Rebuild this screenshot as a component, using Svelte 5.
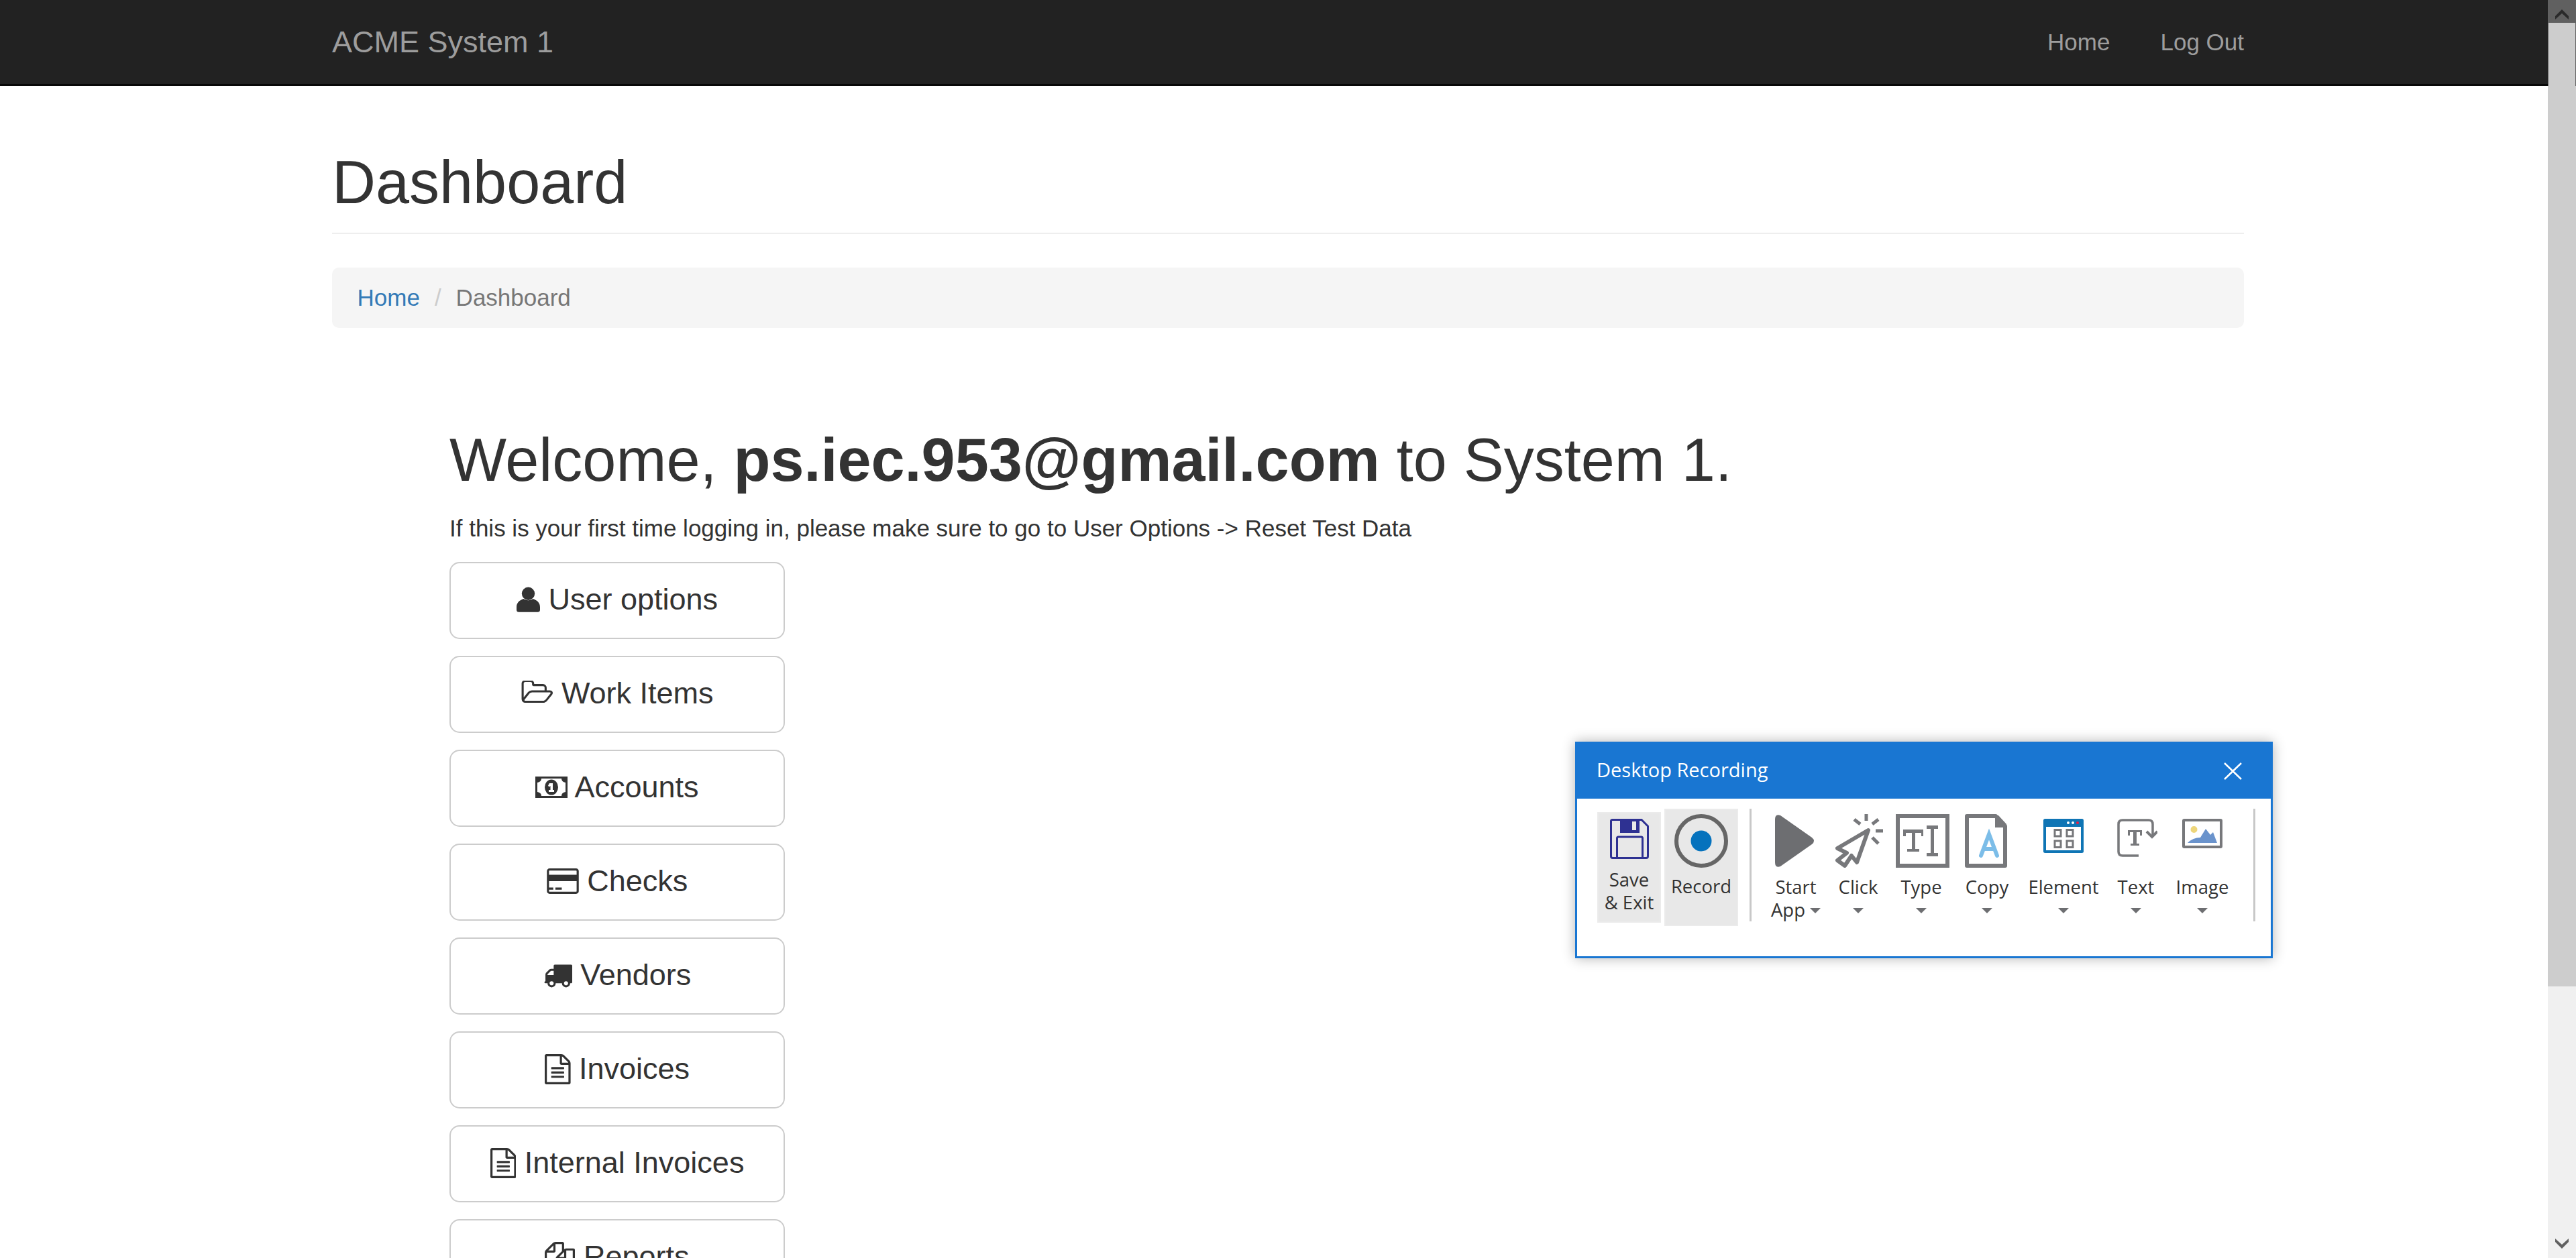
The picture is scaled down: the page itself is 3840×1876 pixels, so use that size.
<script>
  const menu = [
    { label: "User options", icon: "user" },
    { label: "Work Items", icon: "folder" },
    { label: "Accounts", icon: "money" },
    { label: "Checks", icon: "card" },
    { label: "Vendors", icon: "truck" },
    { label: "Invoices", icon: "file" },
    { label: "Internal Invoices", icon: "file" },
    { label: "Reports", icon: "files" },
  ];

  const filePath =
    "M1596 380q28 28 48 76t20 88v1152q0 40-28 68t-68 28h-1344q-40 0-68-28t-28-68v-1600q0-40 28-68t68-28h896q40 0 88 20t76 48zm-444-244v376h376q-10-29-22-41l-313-313q-12-12-41-22zm384 1528v-1024h-416q-40 0-68-28t-28-68v-416h-768v1536h1280zm-1024-864q0-14 9-23t23-9h704q14 0 23 9t9 23v64q0 14-9 23t-23 9h-704q-14 0-23-9t-9-23v-64zm736 224q14 0 23 9t9 23v64q0 14-9 23t-23 9h-704q-14 0-23-9t-9-23v-64q0-14 9-23t23-9h704zm0 256q14 0 23 9t9 23v64q0 14-9 23t-23 9h-704q-14 0-23-9t-9-23v-64q0-14 9-23t23-9h704z";
</script>

<div class="page">
  <nav class="navbar">
    <div class="container nav-inner">
      <span class="brand">ACME System 1</span>
      <div class="nav-links">
        <span>Home</span>
        <span>Log Out</span>
      </div>
    </div>
  </nav>

  <div class="container">
    <div class="page-header"><h1>Dashboard</h1></div>
    <ol class="breadcrumb">
      <li><span class="link">Home</span></li>
      <li class="sep">/</li>
      <li class="active">Dashboard</li>
    </ol>

    <div class="welcome">
      <h2>Welcome, <strong>ps.iec.953@gmail.com</strong> to System 1.</h2>
      <p>If this is your first time logging in, please make sure to go to User Options -&gt; Reset Test Data</p>
      <div class="menu">
        {#each menu as item}
          <button type="button" class="btn">
            {#if item.icon === "user"}
              <svg class="i-user" viewBox="0 0 98 105"><circle cx="49" cy="28" r="27" /><path d="M0 85C0 66 12 56 30 50 38 58 60 58 68 50 86 56 98 66 98 85V95Q98 105 88 105H10Q0 105 0 95Z" /></svg>
            {:else if item.icon === "folder"}
              <svg class="i-folder" viewBox="0 192 1973 1408"><path d="M1845 931q0-35-53-35h-1088q-40 0-85.5 21.5t-71.5 52.5l-294 363q-18 24-18 40 0 35 53 35h1088q40 0 86-22t71-53l294-363q18-22 18-39zm-1141-163h768v-160q0-40-28-68t-68-28h-576q-40 0-68-28t-28-68v-64q0-40-28-68t-68-28h-320q-40 0-68 28t-28 68v853l256-315q44-53 116-87.5t140-34.5zm1269 163q0 62-46 120l-295 363q-43 53-116 87.5t-140 34.5h-1088q-92 0-158-66t-66-158v-960q0-92 66-158t158-66h320q92 0 158 66t66 158v32h544q92 0 158 66t66 158v160h192q54 0 99 24.5t67 70.5q15 32 15 68z" /></svg>
            {:else if item.icon === "money"}
              <svg class="i-money" viewBox="0 0 48 32"><path fill-rule="evenodd" d="M0 0H48V32H0ZM9 3Q9 8 3 9V23Q9 24 9 29H39Q39 24 45 23V9Q39 8 39 3Z" /><ellipse cx="24" cy="16" rx="10" ry="11.5" /><path fill="#fff" d="M21 10H26V20H28V23H20V20H22.5V14L20.5 15.5 19 13.5Z" /></svg>
            {:else if item.icon === "card"}
              <svg class="i-card" viewBox="0 128 1920 1536"><path d="M1760 128q66 0 113 47t47 113v1216q0 66-47 113t-113 47h-1600q-66 0-113-47t-47-113v-1216q0-66 47-113t113-47h1600zm-1600 128q-13 0-22.5 9.5t-9.5 22.5v224h1664v-224q0-13-9.5-22.5t-22.5-9.5h-1600zm1600 1280q13 0 22.5-9.5t9.5-22.5v-608h-1664v608q0 13 9.5 22.5t22.5 9.5h1600zm-1632-128v-128h256v128h-256zm384 0v-128h384v128h-384z" /></svg>
            {:else if item.icon === "truck"}
              <svg class="i-truck" viewBox="0 256 1792 1408"><path d="M640 1408q0-52-38-90t-90-38-90 38-38 90 38 90 90 38 90-38 38-90zm-384-512h384v-256h-158q-13 0-22 9l-195 195q-9 9-9 22v30zm1280 512q0-52-38-90t-90-38-90 38-38 90 38 90 90 38 90-38 38-90zm256-1088v1024q0 15-4 26.5t-13.5 18.5-16.5 11.5-23.5 6-22.5 2-25.5 0-22.5-.5q0 106-75 181t-181 75-181-75-75-181h-384q0 106-75 181t-181 75-181-75-75-181h-64q-3 0-22.5.5t-25.5 0-22.5-2-23.5-6-16.5-11.5-13.5-18.5-4-26.5q0-26 19-45t45-19v-320q0-8-.5-35t0-38 2.5-34.5 6.5-37 14-30.5 22.5-30l198-198q19-19 50.5-32t58.5-13h160v-192q0-26 19-45t45-19h1024q26 0 45 19t19 45z" /></svg>
            {:else if item.icon === "file"}
              <svg class="i-file" viewBox="128 0 1536 1792"><path d={filePath} /></svg>
            {:else}
              <svg class="i-files" viewBox="0 0 1792 1792"><path d="M1696 384q40 0 68 28t28 68v1216q0 40-28 68t-68 28h-960q-40 0-68-28t-28-68v-288h-544q-40 0-68-28t-28-68v-672q0-40 20-88t48-76l408-408q28-28 76-48t88-20h416q40 0 68 28t28 68v328q68-40 128-40h416zm-544 213l-299 299h299v-299zm-640-384l-299 299h299v-299zm196 647l316-316v-416h-384v416q0 40-28 68t-68 28h-416v640h512v-256q0-40 20-88t48-76zm956 804v-1152h-384v416q0 40-28 68t-68 28h-416v640h896z" /></svg>
            {/if}
            {item.label}
          </button>
        {/each}
      </div>
    </div>
  </div>

  <!-- recorder window floats over the page -->
  <div class="recorder">
    <div class="rec-title">
      <span>Desktop Recording</span>
      <svg class="rec-close" viewBox="0 0 27 26"><path d="M1 1L26 25M26 1L1 25" /></svg>
    </div>
    <div class="ribbon">
      <div class="tool save">
        <div class="icon">
          <svg width="58" height="60" viewBox="0 0 58 60">
            <path class="navy" d="M3.5 1.5H47L56.5 11V56Q56.5 58.5 54 58.5H4Q1.5 58.5 1.5 56V3.5Q1.5 1.5 3.5 1.5Z" />
            <path fill="#2e3192" fill-rule="evenodd" d="M15 2H44V21H15ZM33 4V17H39V4Z" />
            <path class="navy" d="M10.5 58V29Q10.5 27 12.5 27H46.5Q48.5 27 48.5 29V58" />
          </svg>
        </div>
        <div class="line">Save</div>
        <div class="line">&amp; Exit</div>
      </div>

      <div class="tool record">
        <div class="icon">
          <svg width="80" height="80" viewBox="0 0 80 80"><circle cx="40" cy="40" r="37" fill="none" stroke="#666" stroke-width="6" /><circle cx="40" cy="40" r="15.5" fill="#0572bd" /></svg>
        </div>
        <div class="line">Record</div>
      </div>

      <div class="sep-v first"></div>

      <div class="tool w-start">
        <div class="icon">
          <svg width="59" height="80" viewBox="0 0 59 80"><path fill="#6d6e71" d="M0 8Q0 -1 8 2L55 35Q61 40 55 45L8 78Q0 81 0 72Z" /></svg>
        </div>
        <div class="line">Start</div>
        <div class="line">App<i class="caret inline"></i></div>
      </div>

      <div class="tool w-click">
        <div class="icon">
          <svg width="72" height="80" viewBox="0 0 72 80">
            <path class="gray" stroke-width="6" stroke-linejoin="round" d="M50 24L4 51 18 58 4 69 15 77 25 62 33 72Z" />
            <path class="gray" stroke-width="5" d="M47 0V10M29 8L38 15M65 8L56 15M61 25H72M56 35L65 44" />
          </svg>
        </div>
        <div class="line">Click</div>
        <div class="line"><i class="caret"></i></div>
      </div>

      <div class="tool w-type">
        <div class="icon">
          <svg width="80" height="80" viewBox="0 0 80 80">
            <rect class="gray" x="3" y="3" width="74" height="74" stroke-width="6" />
            <path fill="#77787b" d="M11 23H41V33H38V28H29V52H35V56H17V52H24V28H15V33H11ZM46 17H63V22H57V58H63V63H46V58H52V22H46Z" />
          </svg>
        </div>
        <div class="line">Type</div>
        <div class="line"><i class="caret"></i></div>
      </div>

      <div class="tool w-copy">
        <div class="icon">
          <svg width="63" height="80" viewBox="0 0 63 80">
            <path class="gray" stroke-width="6" stroke-linejoin="round" d="M3 3H46L60 18V77H3Z" />
            <path fill="#77787b" d="M45 2H50L62 15V20H45Z" />
            <path fill="none" stroke="#7cbde8" stroke-width="6" stroke-linecap="round" d="M24 62L36 30 48 62M28 52H44" />
          </svg>
        </div>
        <div class="line">Copy</div>
        <div class="line"><i class="caret"></i></div>
      </div>

      <div class="tool w-element">
        <div class="icon low">
          <svg width="60" height="51" viewBox="0 0 60 51">
            <rect width="60" height="51" rx="2.5" fill="#0f75b5" />
            <rect x="4" y="12" width="52" height="35" fill="#fff" />
            <circle cx="37" cy="6" r="2" fill="#fff" /><circle cx="44" cy="6" r="2" fill="#fff" /><circle cx="51" cy="6" r="2" fill="#ed1c44" />
            <path class="gray" stroke-width="3" d="M17 16.5H26V26H17ZM35 16.5H44V26H35ZM17 33H26V42.5H17ZM35 33H44V42.5H35Z" />
          </svg>
        </div>
        <div class="line">Element</div>
        <div class="line"><i class="caret"></i></div>
      </div>

      <div class="tool w-text">
        <div class="icon low">
          <svg width="60" height="57" viewBox="0 0 60 57">
            <path class="gray" stroke-width="3.5" d="M32 55H8Q2 55 2 49V8Q2 2 8 2H47Q53 2 53 8V25" />
            <path class="gray" stroke-width="4" d="M44 19L52 27 60 19" />
            <path fill="#77787b" d="M16 17H37V25H34V20H29V37H33V40H20V37H24V20H19V25H16Z" />
          </svg>
        </div>
        <div class="line">Text</div>
        <div class="line"><i class="caret"></i></div>
      </div>

      <div class="tool w-image">
        <div class="icon low">
          <svg width="60" height="44" viewBox="0 0 60 44">
            <rect class="gray" x="2" y="2" width="56" height="40" rx="1" stroke-width="4" />
            <circle cx="17.5" cy="16" r="5" fill="#eed67a" />
            <path fill="#6a93cc" d="M8 36Q16 28 27 28L35 15 42 24 46 20 52 36Z" />
          </svg>
        </div>
        <div class="line">Image</div>
        <div class="line"><i class="caret"></i></div>
      </div>

      <div class="sep-v last"></div>
    </div>
  </div>

  <div class="scrollbar">
    <div class="sb-cap"></div>
    <div class="sb-thumb"></div>
    <svg class="sb-up" viewBox="0 0 20 15"><path d="M10 0L20 10V15L10 6 0 15V10Z" /></svg>
    <svg class="sb-down" viewBox="0 0 20 15"><path d="M0 0L10 9 20 0V5L10 15 0 5Z" /></svg>
  </div>
</div>

<style>
  :global(body) {
    margin: 0;
    overflow: hidden;
    background: #fff;
  }
  .page {
    position: relative;
    height: 1876px;
    overflow: hidden;
    font-family: "Liberation Sans", Arial, sans-serif;
    font-size: 35px;
    line-height: 50px;
    color: #333;
  }
  .container {
    width: 2850px;
    margin: 0 auto;
  }
  .navbar {
    height: 125px;
    background: #222;
    border-bottom: 3px solid #080808;
  }
  .nav-inner {
    display: flex;
    justify-content: space-between;
    align-items: center;
    height: 125px;
  }
  .brand {
    font-size: 45px;
    color: #9d9d9d;
  }
  .nav-links {
    display: flex;
    gap: 75px;
    color: #9d9d9d;
  }
  .page-header {
    margin-top: 95px;
    padding-bottom: 25px;
    border-bottom: 2.5px solid #eee;
  }
  .page-header h1 {
    margin: 0;
    font-size: 90px;
    font-weight: 500;
    line-height: 99px;
  }
  .breadcrumb {
    display: flex;
    align-items: center;
    height: 90px;
    box-sizing: border-box;
    margin: 50px 0 0;
    padding: 0 37.5px;
    list-style: none;
    background: #f5f5f5;
    border-radius: 10px;
  }
  .link {
    color: #337ab7;
  }
  .sep {
    padding: 0 22px;
    color: #ccc;
  }
  .active {
    color: #777;
  }
  .welcome {
    padding-left: 175px;
  }
  .welcome h2 {
    margin: 148px 0 0;
    font-size: 90px;
    font-weight: 500;
    line-height: 99px;
  }
  .welcome p {
    margin: 27px 0 0;
  }
  .menu {
    display: flex;
    flex-direction: column;
    gap: 25px;
    margin-top: 25px;
    width: 500px;
  }
  .btn {
    display: block;
    width: 500px;
    box-sizing: border-box;
    height: 115px;
    padding: 0 10px 3px;
    font: inherit;
    font-size: 45px;
    line-height: 60px;
    color: #333;
    background: #fff;
    border: 2.5px solid #ccc;
    border-radius: 15px;
    text-align: center;
  }
  .btn svg {
    fill: #333;
  }
  .i-user {
    width: 35px;
    height: 38px;
    vertical-align: -4px;
  }
  .i-folder {
    width: 48px;
    height: 35px;
    vertical-align: -1px;
  }
  .i-money {
    width: 48px;
    height: 32px;
    vertical-align: -1px;
  }
  .i-card {
    width: 48px;
    height: 38px;
    vertical-align: -4px;
  }
  .i-truck {
    width: 43px;
    height: 35px;
    vertical-align: -4px;
  }
  .i-file {
    width: 38.6px;
    height: 45px;
    vertical-align: -8px;
  }
  .i-files {
    width: 45px;
    height: 45px;
    vertical-align: -8px;
  }
  .recorder {
    position: absolute;
    left: 2348px;
    top: 1106px;
    width: 1040px;
    height: 323px;
    box-sizing: border-box;
    background: #fff;
    border: 3px solid #1976d2;
    box-shadow: 0 0 18px rgba(0, 0, 0, 0.3);
    font-family: "Open Sans", "Noto Sans", sans-serif;
    color: #333;
  }
  .rec-title {
    display: flex;
    justify-content: space-between;
    align-items: center;
    height: 82px;
    box-sizing: border-box;
    padding: 0 43px 0 29px;
    background: #1976d2;
    color: #fff;
    font-size: 29px;
    line-height: 34px;
  }
  .rec-title span {
    margin-bottom: 4px;
  }
  .rec-close {
    width: 27px;
    height: 26px;
    stroke: #fff;
    stroke-width: 2.5;
    fill: none;
  }
  .ribbon {
    display: flex;
    align-items: flex-start;
    padding: 15px 0 0 30px;
  }
  .tool {
    display: flex;
    flex-direction: column;
    align-items: center;
    box-sizing: border-box;
    font-size: 27.5px;
    line-height: 34px;
  }
  .w-start { width: 94px; }
  .w-click { width: 92px; }
  .w-type { width: 96px; }
  .w-copy { width: 100px; }
  .w-element { width: 128px; }
  .w-text { width: 88px; }
  .w-image { width: 110px; }
  /* icons sit a little off the label's centre */
  .w-start .icon { margin-right: 3px; }
  .w-click .icon { margin-left: 2px; }
  .w-type .icon { margin-left: 4px; }
  .w-copy .icon { margin-right: 3px; }
  .w-text .icon { margin-left: 4px; }
  .icon {
    height: 90px;
    margin-bottom: 2px;
    padding-top: 8px;
  }
  .icon svg {
    display: block;
  }
  .icon.low {
    height: 83px;
    padding-top: 15px;
  }
  .line {
    display: flex;
    align-items: center;
    height: 34px;
    white-space: nowrap;
  }
  .save {
    width: 95px;
    height: 165px;
    margin: 5px 5px 0 0;
    background: #e8e8e8;
    border: 2px solid #ebebeb;
  }
  .save .icon {
    height: 71px;
    padding-top: 8px;
    margin-bottom: 3px;
  }
  .record {
    width: 110px;
    height: 175px;
    background: #e8e8e8;
    border: 2px solid #ebebeb;
  }
  .record .icon {
    padding-top: 6px;
    height: 90px;
    margin-bottom: 1px;
  }
  .sep-v {
    flex: none;
    width: 3px;
    height: 168px;
    background: #c8c8c8;
  }
  .sep-v.first {
    margin: 0 19px 0 17px;
  }
  .sep-v.last {
    margin-left: 21px;
  }
  .gray {
    fill: none;
    stroke: #77787b;
  }
  .navy {
    fill: none;
    stroke: #2e3192;
    stroke-width: 3;
  }
  .caret {
    display: block;
    width: 0;
    height: 0;
    margin-top: 2px;
    border-left: 8px solid transparent;
    border-right: 8px solid transparent;
    border-top: 8px solid #6d6e71;
  }
  .caret.inline {
    margin-left: 7px;
  }
  .scrollbar {
    position: absolute;
    top: 0;
    right: 0;
    width: 42px;
    height: 1876px;
    background: #f0f0f0;
  }
  .sb-cap {
    height: 128px;
    background: #606060;
  }
  .sb-thumb {
    position: absolute;
    top: 34px;
    left: 0;
    right: 0;
    height: 1437px;
    background:
      linear-gradient(#606060, #606060) left top / 1px 94px no-repeat,
      linear-gradient(#606060, #606060) right top / 1px 94px no-repeat,
      #cdcdcd;
  }
  .sb-up,
  .sb-down {
    position: absolute;
    left: 11px;
    width: 20px;
    height: 15px;
  }
  .sb-up {
    top: 14px;
    fill: #2a2a2a;
  }
  .sb-down {
    top: 1847px;
    fill: #606060;
  }
</style>
